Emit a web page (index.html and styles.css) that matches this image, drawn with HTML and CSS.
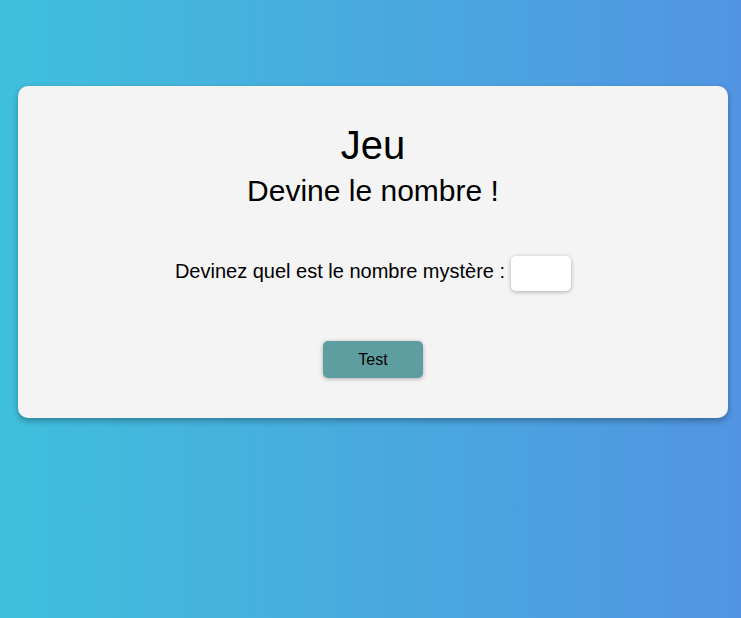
FILE: index.html
```html
<!DOCTYPE html>
<html lang="fr">
<head>
<meta charset="utf-8">
<title>Jeu</title>
<link rel="stylesheet" href="styles.css">
</head>
<body>
<main class="card">
  <h1 class="title">Jeu</h1>
  <h2 class="subtitle">Devine le nombre !</h2>
  <div class="guess-row">
    <label class="guess-label" for="guess">Devinez quel est le nombre mystère :</label>
    <input class="guess-input" id="guess" type="text">
  </div>
  <button class="test-btn" type="button">Test</button>
</main>
</body>
</html>
```
FILE: styles.css
```css
html, body {
  margin: 0;
  height: 100%;
}
body {
  background: linear-gradient(to right, #40bfdc, #5195e2);
  font-family: "Liberation Sans", Arial, sans-serif;
  padding-top: 86px;
  box-sizing: border-box;
}
.card {
  margin-left: 18px;
  width: 710px;
  box-sizing: border-box;
  background: #f4f4f4;
  border-radius: 10px;
  box-shadow: 0 3px 6px rgba(0, 0, 0, 0.3);
  padding: 36px 0 40px;
  display: flex;
  flex-direction: column;
  align-items: center;
  color: #000;
}
.title {
  margin: 0;
  font-size: 40px;
  font-weight: normal;
  line-height: 46px;
}
.subtitle {
  margin: 6px 0 0;
  font-size: 30px;
  font-weight: normal;
  line-height: 34px;
}
.guess-row {
  margin-top: 48px;
  display: flex;
  align-items: center;
  gap: 6px;
}
.guess-label {
  font-size: 20px;
  line-height: 23px;
  margin-bottom: 4px;
}
.guess-input {
  width: 60px;
  height: 35px;
  box-sizing: border-box;
  border: none;
  border-radius: 5px;
  background: #fff;
  box-shadow: 0 1px 4px rgba(0, 0, 0, 0.3);
  padding: 0 6px;
  font-size: 16px;
}
.test-btn {
  margin-top: 50px;
  width: 100px;
  height: 37px;
  border: none;
  border-radius: 5px;
  background: #5f9ea0;
  color: #000;
  font-family: "Liberation Sans", Arial, sans-serif;
  font-size: 16px;
  box-shadow: 0 1px 4px rgba(0, 0, 0, 0.3);
}
```
